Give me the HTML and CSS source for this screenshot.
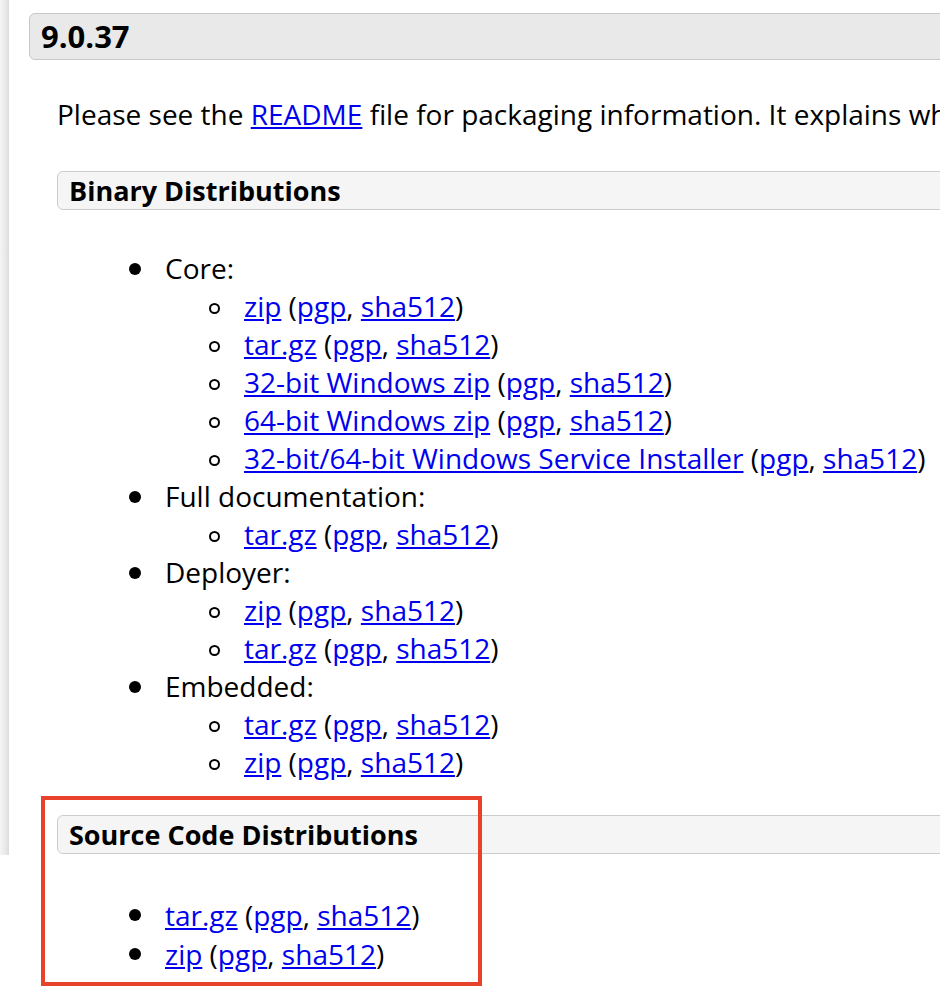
FILE: index.html
```html
<!DOCTYPE html>
<html>
<head>
<meta charset="utf-8">
<link rel="stylesheet" href="styles.css">
</head>
<body>
<div class="page">
  <div class="strip"></div>
  <div class="main">
    <h3 class="version">9.0.37</h3>
    <div class="section">
      <p class="intro">Please see the <a href="#">README</a> file for packaging information. It explains what every distribution contains.</p>
      <h4 class="dist">Binary Distributions</h4>
      <ul class="outer">
        <li>Core:
          <ul class="inner">
            <li><a href="#">zip</a> (<a href="#">pgp</a>, <a href="#">sha512</a>)</li>
            <li><a href="#">tar.gz</a> (<a href="#">pgp</a>, <a href="#">sha512</a>)</li>
            <li><a href="#">32-bit Windows zip</a> (<a href="#">pgp</a>, <a href="#">sha512</a>)</li>
            <li><a href="#">64-bit Windows zip</a> (<a href="#">pgp</a>, <a href="#">sha512</a>)</li>
            <li><a href="#">32-bit/64-bit Windows Service Installer</a> (<a href="#">pgp</a>, <a href="#">sha512</a>)</li>
          </ul>
        </li>
        <li>Full documentation:
          <ul class="inner">
            <li><a href="#">tar.gz</a> (<a href="#">pgp</a>, <a href="#">sha512</a>)</li>
          </ul>
        </li>
        <li>Deployer:
          <ul class="inner">
            <li><a href="#">zip</a> (<a href="#">pgp</a>, <a href="#">sha512</a>)</li>
            <li><a href="#">tar.gz</a> (<a href="#">pgp</a>, <a href="#">sha512</a>)</li>
          </ul>
        </li>
        <li>Embedded:
          <ul class="inner">
            <li><a href="#">tar.gz</a> (<a href="#">pgp</a>, <a href="#">sha512</a>)</li>
            <li><a href="#">zip</a> (<a href="#">pgp</a>, <a href="#">sha512</a>)</li>
          </ul>
        </li>
      </ul>
      <h4 class="dist src">Source Code Distributions</h4>
      <ul class="outer srclist">
        <li><a href="#">tar.gz</a> (<a href="#">pgp</a>, <a href="#">sha512</a>)</li>
        <li><a href="#">zip</a> (<a href="#">pgp</a>, <a href="#">sha512</a>)</li>
      </ul>
    </div>
  </div>
  <div class="highlight"></div>
</div>
</body>
</html>
```
FILE: styles.css
```css
html, body {
  margin: 0;
  padding: 0;
  background: #fff;
  overflow: hidden;
}
body {
  width: 940px;
  height: 992px;
  font-family: "Open Sans", "Noto Sans", sans-serif;
  font-size: 28px;
  color: #000;
}
.page {
  position: relative;
  display: flex;
  align-items: flex-start;
  width: 940px;
  height: 992px;
  overflow: hidden;
}
.strip {
  flex: 0 0 9px;
  height: 855px;
  background: linear-gradient(to right, #f4f4f4, #e9e9e9 60%, #dcdcdc);
}
.main {
  flex: 0 0 1280px;
  padding-left: 20px;
}
.version {
  margin: 13px 0 0 0;
  font-size: 31px;
  font-weight: bold;
  line-height: 45px;
  padding: 0 11px;
  background: #e9e9e9;
  border: 1px solid #c8c8c8;
  border-radius: 6px;
}
.section {
  padding-left: 28px;
}
.intro {
  margin: 35px 0 0 0;
  line-height: 38px;
  white-space: nowrap;
}
a {
  color: #0000ee;
  text-decoration: underline;
}
.dist {
  margin: 38px 0 0 0;
  font-size: 27px;
  font-weight: bold;
  line-height: 37px;
  padding: 0 11px;
  background: #f5f5f5;
  border: 1px solid #cccccc;
  border-radius: 6px;
}
ul {
  margin: 0;
  padding: 0;
  line-height: 38px;
  white-space: nowrap;
  list-style: none;
}
li {
  position: relative;
}
.outer {
  margin-top: 39px;
  padding-left: 108px;
}
.inner {
  padding-left: 79px;
}
.outer > li::before {
  content: "";
  position: absolute;
  left: -36px;
  top: 14px;
  width: 12px;
  height: 12px;
  border-radius: 50%;
  background: #000;
}
.inner > li::before {
  content: "";
  position: absolute;
  left: -35px;
  top: 16px;
  width: 11px;
  height: 11px;
  box-sizing: border-box;
  border: 2px solid #000;
  border-radius: 50%;
}
.dist.src {
  margin-top: 34px;
}
.srclist {
  margin-top: 42px;
}
.srclist li {
  line-height: 39px;
}
.srclist > li::before {
  top: 13px;
}
.highlight {
  position: absolute;
  left: 41px;
  top: 796px;
  width: 441px;
  height: 190px;
  box-sizing: border-box;
  border: 4px solid #e8412c;
}
```
